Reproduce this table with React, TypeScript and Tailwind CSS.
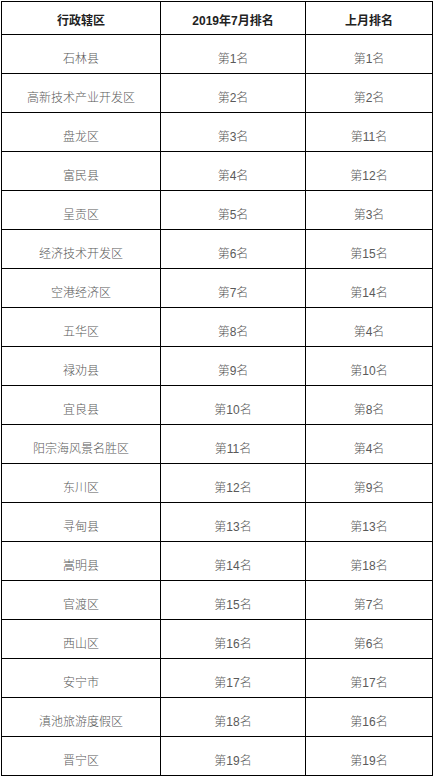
import { Fragment } from "react";

const rows: [string, string, string][] = [
  ["石林县", "第1名", "第1名"],
  ["高新技术产业开发区", "第2名", "第2名"],
  ["盘龙区", "第3名", "第11名"],
  ["富民县", "第4名", "第12名"],
  ["呈贡区", "第5名", "第3名"],
  ["经济技术开发区", "第6名", "第15名"],
  ["空港经济区", "第7名", "第14名"],
  ["五华区", "第8名", "第4名"],
  ["禄劝县", "第9名", "第10名"],
  ["宜良县", "第10名", "第8名"],
  ["阳宗海风景名胜区", "第11名", "第4名"],
  ["东川区", "第12名", "第9名"],
  ["寻甸县", "第13名", "第13名"],
  ["嵩明县", "第14名", "第18名"],
  ["官渡区", "第15名", "第7名"],
  ["西山区", "第16名", "第6名"],
  ["安宁市", "第17名", "第17名"],
  ["滇池旅游度假区", "第18名", "第16名"],
  ["晋宁区", "第19名", "第19名"],
];

const cell =
  "flex items-center justify-center border-r border-b border-black";
const head = `${cell} h-[33px] pt-[5px] text-[12px] font-bold text-[#222]`;
const body = `${cell} h-[39px] pt-[9px] text-[12px] font-light text-[#5a5a5a]`;

export default function App() {
  return (
    <div className="min-h-[778px] bg-white pt-px pl-px font-['Liberation_Sans','Noto_Sans_CJK_SC',sans-serif]">
      <div className="grid w-[432px] grid-cols-[159px_145px_127px] border-l border-t border-black">
        <div className={head}>行政辖区</div>
        <div className={head}>2019年7月排名</div>
        <div className={head}>上月排名</div>
        {rows.map(([area, now, last]) => (
          <Fragment key={area}>
            <div className={body}>{area}</div>
            <div className={body}>{now}</div>
            <div className={body}>{last}</div>
          </Fragment>
        ))}
      </div>
    </div>
  );
}
